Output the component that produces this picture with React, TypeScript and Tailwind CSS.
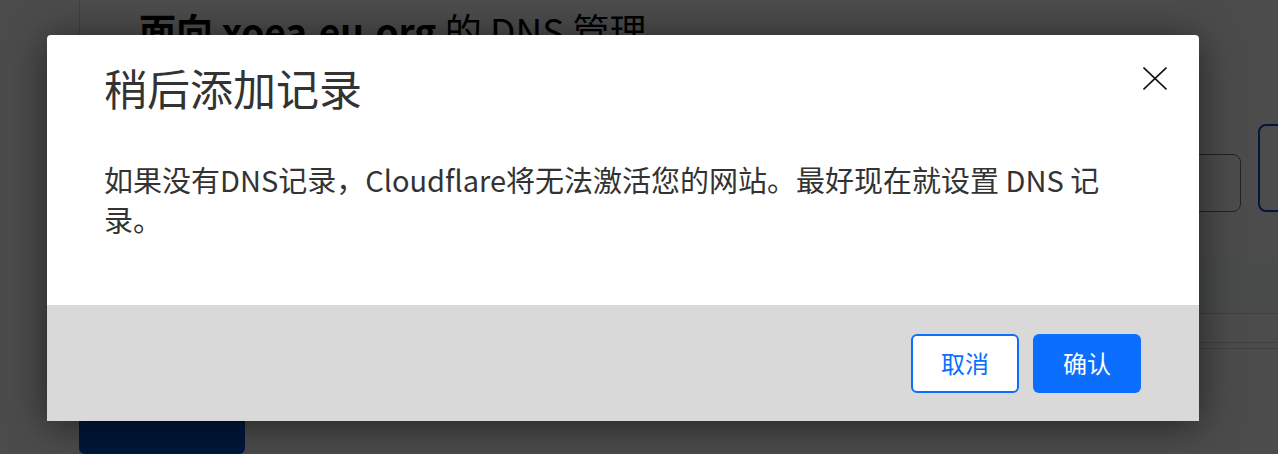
import React from 'react';

const font = 'font-["Noto_Sans_CJK_SC","Noto_Sans",sans-serif]';

const CloseIcon: React.FC = () => (
  <svg width="24" height="24" viewBox="0 0 24 24" fill="none" stroke="#111" strokeWidth="1.6">
    <path d="M0.5 0.5 23.5 22.5" />
    <path d="M23.5 0.5 0.5 22.5" />
  </svg>
);

const App: React.FC = () => {
  return (
    <div className={`relative w-full h-[454px] overflow-hidden bg-white ${font}`}>
      {/* Page behind the dialog */}
      <div className="flex h-full">
        <div className="w-[80px] shrink-0 border-r border-gray-300 h-full" />
        <div className="flex-1 flex flex-col min-w-0">
          <h1 className="pl-[59px] pt-[6px] text-[37px] leading-[48px] text-black whitespace-nowrap">
            <span className="font-bold">面向 xoea.eu.org</span> 的 DNS 管理
          </h1>
          <div className="flex items-end gap-[17px] mt-[70px]">
            <div className="ml-auto w-[320px] h-[58px] rounded-[8px] border border-gray-500" />
            <div className="w-[120px] h-[88px] shrink-0 -mr-[100px] rounded-[8px] border-2 border-[#0051c3]" />
          </div>
          <div className="mt-[45px] h-[73px] bg-gray-50 border-b border-gray-300" />
          <div className="mt-[28px] h-[9px] border-t border-b border-gray-300" />
          <div className="mt-[58px] -ml-px w-[166px] h-[60px] rounded-[6px] bg-[#0051c3]" />
        </div>
      </div>

      {/* Backdrop */}
      <div className="absolute inset-0 bg-black/70" />

      {/* Dialog */}
      <div className="absolute left-[47px] top-[35px] w-[1152px] rounded-t-[4px] bg-white shadow-[0_4px_40px_rgba(0,0,0,0.55)] flex flex-col">
        <div className="h-[270px] pl-[57px] pr-[32px] pt-[26px]">
          <div className="flex items-start justify-between">
            <h2 className="text-[43px] leading-[52px] text-[#333]">稍后添加记录</h2>
            <button className="mt-[6px]">
              <CloseIcon />
            </button>
          </div>
          <p className="mt-[46px] pr-[40px] text-[29px] leading-[40px] text-[#333]">
            如果没有DNS记录，Cloudflare将无法激活您的网站。最好现在就设置 DNS 记录。
          </p>
        </div>
        <div className="h-[116px] bg-[#d9d9d9] flex items-center justify-end gap-[14px] pr-[58px]">
          <button className="w-[108px] h-[59px] rounded-[6px] border-2 border-[#0b6efd] bg-white text-[24px] text-[#0b6efd]">
            取消
          </button>
          <button className="w-[108px] h-[59px] rounded-[6px] bg-[#0b6efd] text-[24px] text-white">
            确认
          </button>
        </div>
      </div>
    </div>
  );
};

export default App;
